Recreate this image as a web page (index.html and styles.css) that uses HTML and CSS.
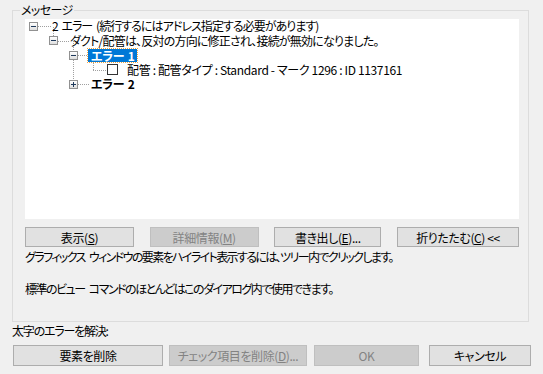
FILE: index.html
```html
<!DOCTYPE html>
<html lang="ja">
<head>
    <meta charset="UTF-8">
    <title>メッセージ</title>
    <link rel="stylesheet" href="styles.css">
</head>
<body>

    <div class="group">
        <div class="legend">メッセージ</div>

        <div class="tree">
            <!-- 接続線 -->
            <svg class="lines" width="494" height="200">
                <g stroke="#a0a0a0" stroke-dasharray="1 1" shape-rendering="crispEdges">
                    <line x1="13" y1="7.5" x2="26" y2="7.5"/>
                    <line x1="28.5" y1="8" x2="28.5" y2="18"/>
                    <line x1="33" y1="22.5" x2="44" y2="22.5"/>
                    <line x1="48.5" y1="22" x2="48.5" y2="33"/>
                    <line x1="48.5" y1="41" x2="48.5" y2="62"/>
                    <line x1="53" y1="36.5" x2="62" y2="36.5"/>
                    <line x1="68.5" y1="42" x2="68.5" y2="51"/>
                    <line x1="68" y1="51.5" x2="81" y2="51.5"/>
                    <line x1="53" y1="65.5" x2="64" y2="65.5"/>
                </g>
            </svg>

            <div class="row lvl0">
                <span class="exp minus"></span>
                <span class="label">2 エラー (続行するにはアドレス指定する必要があります)</span>
            </div>
            <div class="row lvl1">
                <span class="exp minus"></span>
                <span class="label">ダクト/配管は、反対の方向に修正され、接続が無効になりました。</span>
            </div>
            <div class="row lvl2">
                <span class="exp minus"></span>
                <span class="label bold selected">エラー 1</span>
            </div>
            <div class="row lvl3">
                <span class="check"></span>
                <span class="label">配管 : 配管タイプ : Standard - マーク 1296 : ID 1137161</span>
            </div>
            <div class="row lvl2">
                <span class="exp plus"></span>
                <span class="label bold">エラー 2</span>
            </div>
        </div>

        <div class="btn-row">
            <button class="btn w1">表示(<u>S</u>)</button>
            <button class="btn w1" disabled>詳細情報(<u>M</u>)</button>
            <button class="btn w2">書き出し(<u>E</u>)...</button>
            <button class="btn w3">折りたたむ(<u>C</u>) &lt;&lt;</button>
        </div>

        <p class="info">グラフィックス ウィンドウの要素をハイライト表示するには、ツリー内でクリックします。</p>
        <p class="info gap">標準のビュー コマンドのほとんどはこのダイアログ内で使用できます。</p>
    </div>

    <p class="resolve">太字のエラーを解決:</p>

    <div class="footer">
        <button class="btn f1">要素を削除</button>
        <button class="btn f2" disabled>チェック項目を削除(<u>D</u>)...</button>
        <button class="btn f3" disabled>OK</button>
        <button class="btn f4">キャンセル</button>
    </div>

</body>
</html>
```

FILE: styles.css
```css
body {
    margin: 0;
    background-color: #f0f0f0;
    font-family: "Noto Sans CJK JP", "Noto Sans", sans-serif;
    font-size: 12px;
    font-feature-settings: "palt";
    color: #000;
}

/* グループボックス */
.group {
    position: relative;
    margin: 10px 0 0 12px;
    width: 517px;
    height: 312px;
    box-sizing: border-box;
    border: 1px solid #dcdcdc;
    padding: 8px 0 0 12px;
}

.legend {
    position: absolute;
    top: -8px;
    left: 7px;
    padding: 0 1px;
    line-height: 14px;
    letter-spacing: -0.6px;
    background-color: #f0f0f0;
}

/* ツリー */
.tree {
    position: relative;
    width: 494px;
    height: 200px;
    background-color: #fff;
}

.lines {
    position: absolute;
    top: 0;
    left: 0;
}

.row {
    position: relative;
    display: flex;
    align-items: center;
    height: 14.5px;
    white-space: nowrap;
}

.label {
    line-height: 14px;
}

.lvl0 { padding-left: 4px; }
.lvl1 { padding-left: 24px; }
.lvl2 { padding-left: 44px; }
.lvl3 { padding-left: 82px; }

.lvl0 .label { margin-left: 14px; letter-spacing: -0.95px; word-spacing: 2px; }
.lvl1 .label { margin-left: 12px; letter-spacing: -0.8px; }
.lvl2 .label { margin-left: 10px; padding: 0 3px; letter-spacing: -0.3px; word-spacing: 1px; }
.lvl3 .label { margin-left: 9px; letter-spacing: -0.35px; }

.exp {
    position: relative;
    width: 9px;
    height: 9px;
    box-sizing: border-box;
    border: 1px solid #919191;
    background: linear-gradient(#fff, #dedede);
    flex-shrink: 0;
}

.exp::before {
    content: "";
    position: absolute;
    left: 1px;
    top: 3px;
    width: 5px;
    height: 1px;
    background-color: #1e395b;
}

.exp.plus::after {
    content: "";
    position: absolute;
    left: 3px;
    top: 1px;
    width: 1px;
    height: 5px;
    background-color: #1e395b;
}

.check {
    width: 11px;
    height: 11px;
    box-sizing: border-box;
    border: 1px solid #333;
    background-color: #fff;
    flex-shrink: 0;
}

.bold { font-weight: bold; }

.selected {
    color: #fff;
    background-color: #0078d7;
    outline: 1px dotted #f3a33e;
    line-height: 13px;
}

/* ボタン */
.btn-row {
    display: flex;
    justify-content: space-between;
    width: 494px;
    margin-top: 8px;
}

.btn {
    height: 20px;
    padding: 0;
    font-family: inherit;
    font-size: 12px;
    font-feature-settings: "palt";
    letter-spacing: -0.4px;
    color: #000;
    background-color: #e1e1e1;
    border: 1px solid #adadad;
}

.btn:disabled {
    color: #838383;
    background-color: #cccccc;
    border-color: #bfbfbf;
}

.btn u { text-underline-offset: 1px; }

.w1 { width: 109px; }
.w2 { width: 107px; }
.w3 { width: 122px; }

.info {
    margin: 2px 0 0;
    line-height: 16px;
    letter-spacing: -1.6px;
    word-spacing: 3px;
    white-space: nowrap;
}

.info.gap {
    margin-top: 16px;
    letter-spacing: -1.5px;
}

.resolve {
    margin: 1px 0 0 12px;
    line-height: 16px;
    letter-spacing: -1.2px;
}

.footer {
    display: flex;
    margin: 6px 0 0 13px;
}

.footer .btn { height: 21px; }

.f1 { width: 150px; }
.f2 { width: 138px; margin-left: 6px; }
.f3 { width: 105px; margin-left: 7px; }
.f4 { width: 102px; margin-left: 10px; }
```
